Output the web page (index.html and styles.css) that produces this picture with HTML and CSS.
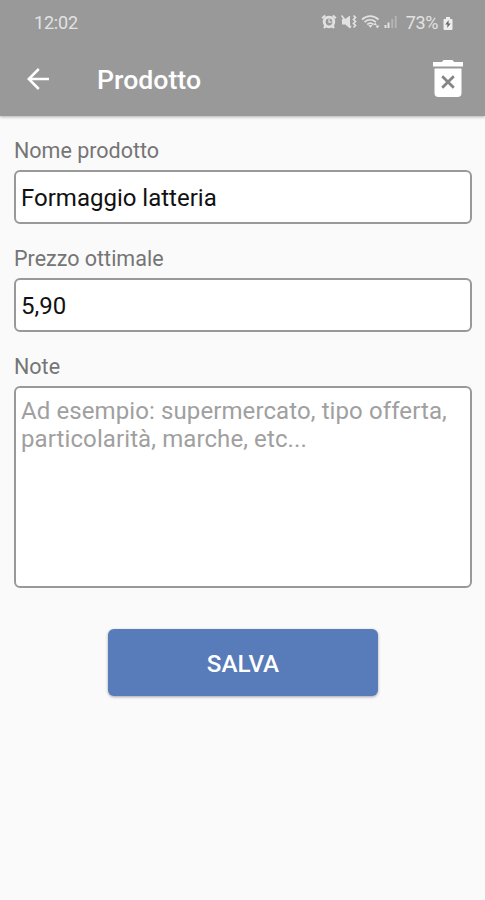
FILE: index.html
```html
<!DOCTYPE html>
<html lang="it">
<head>
<meta charset="utf-8">
<title>Prodotto</title>
<link rel="stylesheet" href="styles.css">
</head>
<body>
<header class="header">
  <div class="status">
    <span class="clock">12:02</span>
    <svg class="status-icons" width="77" height="18" viewBox="0 0 77 18" fill="none" stroke="currentColor">
      <circle cx="8" cy="9" r="4.800" stroke-width="2.800"/>
      <path d="M1.200 5.200 4.200 2.500M14.800 5.200 11.800 2.500M4.600 13 3 15M11.400 13 13 15" stroke-width="2.200"/>
      <path d="M8 6v3.200h2.600" stroke-width="1.200"/>
      <path d="M21 6h3.300L29 2.500v13l-4.700-4h-3.300z" fill="currentColor" stroke="none"/>
      <path d="M20.500 2.500l9.500 12" stroke-width="1.600"/>
      <path d="M32.500 2.500l2 2-2 2 2 2-2 2 2 2-2 2" stroke-width="1.700"/>
      <path d="M41 6.500C46 2 52.500 2 57.500 6.500M43.500 9.200c3.300-3 7.900-3 11.300 0M46.200 11.500c2-1.700 4.200-1.700 6.200 0" stroke-width="1.800"/>
      <path d="M47.300 12h4.200l-2.100 2.900zM52.300 12l2-2.600 1.500 2.600zM54.300 12.500h4.200l-2.100 2.900z" fill="currentColor" stroke="none"/>
      <path d="M64.500 15v-3M67.500 15v-5.500" stroke-width="2"/>
      <path d="M71.200 15v-9M74.700 15v-12" stroke-width="1.800" opacity=".4"/>
    </svg>
    <span class="percent">73%</span>
    <svg class="battery" width="10" height="13" viewBox="0 0 10 13">
      <path d="M3 0h4v2h1.500q1 0 1 1v9q0 1-1 1h-7q-1 0-1-1V3q0-1 1-1H3z" fill="#eee"/>
      <path d="M5.700 3 2.300 7.500h2.200l-.4 3.500L7.700 6.500H5.500z" fill="#666"/>
    </svg>
  </div>
  <div class="toolbar">
    <svg class="back" width="24" height="24" viewBox="0 0 24 24" fill="none" stroke="#fff" stroke-width="2.500">
      <path d="M23 12H3M12.800 2 2.800 12l10 10"/>
    </svg>
    <h1 class="title">Prodotto</h1>
    <svg class="delete" width="30" height="38" viewBox="0 0 30 38">
      <path d="M0 2h9l1.500-2h9L21 2h9v4.500H0z" fill="#fff"/>
      <path d="M1.500 8.500h27V33q0 4-4 4h-19q-4 0-4-4z" fill="#fff"/>
      <path d="M9.200 16.200l11.600 11.600M20.800 16.200l-11.600 11.600" stroke="#858585" stroke-width="2.800"/>
    </svg>
  </div>
</header>
<main class="form">
  <label class="label" for="name">Nome prodotto</label>
  <input class="field" id="name" type="text" value="Formaggio latteria">
  <label class="label" for="price">Prezzo ottimale</label>
  <input class="field price" id="price" type="text" value="5,90">
  <label class="label" for="note">Note</label>
  <textarea class="field note" id="note" placeholder="Ad esempio: supermercato, tipo offerta, particolarità, marche, etc..."></textarea>
  <button class="save" type="button">SALVA</button>
</main>
</body>
</html>
```
FILE: styles.css
```css
* {
  box-sizing: border-box;
}

body {
  margin: 0;
  min-height: 900px;
  background: #fafafa;
  font-family: Roboto, sans-serif;
}

.header {
  height: 116px;
  background: #999;
  box-shadow: 0 1px 3px rgba(0, 0, 0, .3);
}

.status {
  display: flex;
  align-items: center;
  height: 44px;
  padding: 0 32px 0 34px;
  color: #e2e2e2;
  font-size: 18px;
}

.clock {
  letter-spacing: -.2px;
}

.status-icons {
  margin-left: auto;
}

.percent {
  margin-left: 8px;
  letter-spacing: -.4px;
}

.battery {
  margin: 2px 0 0 5px;
}

.toolbar {
  display: flex;
  align-items: center;
  height: 70px;
  padding: 0 22px 0 26px;
}

.title {
  margin: 1px 0 0 47px;
  color: #fff;
  font-size: 26.700px;
  font-weight: 500;
  line-height: 32px;
}

.delete {
  margin-left: auto;
}

.form {
  display: flex;
  flex-direction: column;
  padding: 20px 13px 0 14px;
}

.label {
  height: 34px;
  color: #757575;
  font-size: 21.500px;
  line-height: 29px;
}

.field {
  width: 100%;
  height: 54px;
  margin: 0 0 20px;
  padding: 1px 5px 0;
  border: 2px solid #999;
  border-radius: 6px;
  outline: 0;
  background: #fff;
  color: #111;
  font: 24px Roboto, sans-serif;
}

.note {
  display: block;
  height: 202px;
  margin-bottom: 41px;
  padding-top: 9px;
  line-height: 28px;
  letter-spacing: .1px;
  resize: none;
}

.note::placeholder {
  color: #a0a0a0;
}

.save {
  align-self: center;
  width: 270px;
  height: 67px;
  padding: 2px 0 0;
  border: 0;
  border-radius: 6px;
  background: #587bba;
  box-shadow: 0 1px 3px rgba(0, 0, 0, .35);
  color: #fff;
  font: 500 24.200px Roboto, sans-serif;
}
```
